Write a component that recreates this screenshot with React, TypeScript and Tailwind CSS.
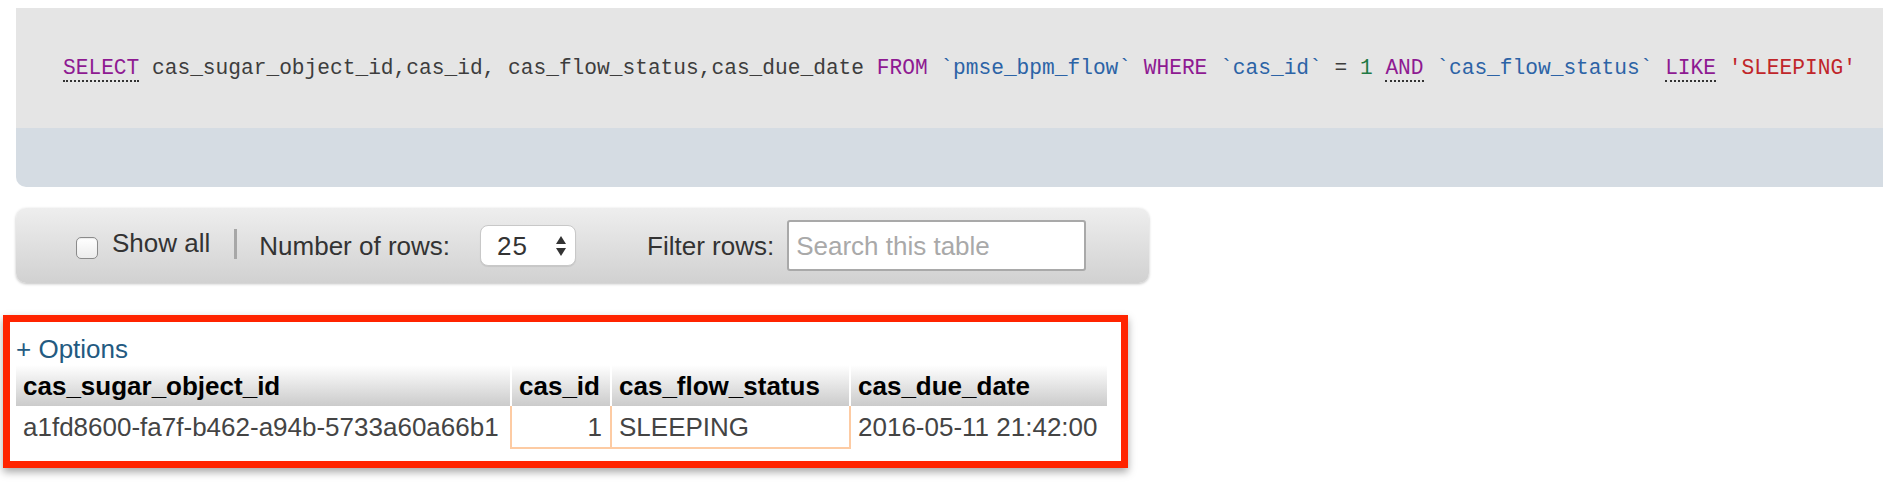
import React from 'react'

const sans = { fontFamily: '"Liberation Sans", Arial, Helvetica, sans-serif' }

function Kw({ children, dotted }: { children: React.ReactNode; dotted?: boolean }) {
  return (
    <span className={dotted ? 'text-[#8e1a92] border-b-[2px] border-dotted border-[#333]' : 'text-[#8e1a92]'}>{children}</span>
  )
}

function Ident({ children }: { children: React.ReactNode }) {
  return <span className="text-[#2c63a6]">{children}</span>
}

function SqlBox() {
  return (
    <div className="ml-[16px] mt-[8px] w-[1867px] overflow-hidden rounded-bl-[10px]">
      <div className="flex h-[120px] items-center bg-[#e5e5e5] pl-[47px]">
        <code className="whitespace-pre font-['Liberation_Mono','Courier_New',monospace] text-[21.2px] leading-[26px] text-[#3d3d3d]">
          <Kw dotted>SELECT</Kw> cas_sugar_object_id,cas_id, cas_flow_status,cas_due_date <Kw>FROM</Kw>{' '}
          <Ident>`pmse_bpm_flow`</Ident> <Kw>WHERE</Kw> <Ident>`cas_id`</Ident> = <span className="text-[#1f7a45]">1</span>{' '}
          <Kw dotted>AND</Kw> <Ident>`cas_flow_status`</Ident> <Kw dotted>LIKE</Kw>{' '}
          <span className="text-[#c0262a]">'SLEEPING'</span>
        </code>
      </div>
      <div className="h-[59px] bg-[#d5dce3]" />
    </div>
  )
}

function UpDown() {
  return (
    <svg width="12" height="22" viewBox="0 0 12 22" className="block">
      <path d="M6 1 L11 9 L1 9 Z" fill="#333" />
      <path d="M6 21 L11 13 L1 13 Z" fill="#333" />
    </svg>
  )
}

function Toolbar() {
  return (
    <div
      className="ml-[16px] mt-[21px] flex h-[75px] w-[1133px] items-center rounded-[10px] bg-gradient-to-b from-[#eeeeee] to-[#d1d1d1] text-[26px] text-[#333] shadow-[0_1px_3px_rgba(0,0,0,0.25)]"
      style={sans}
    >
      <div className="ml-[60px] mt-[4px] h-[22px] w-[22px] rounded-[5px] border border-[#8b8b8b] bg-gradient-to-b from-white to-[#ececec] shadow-[inset_0_1px_1px_rgba(0,0,0,0.08)]" />
      <span className="ml-[14px] -mt-[6px] leading-[30px]">Show all</span>
      <div className="ml-[24px] -mt-[4px] h-[30px] w-[3px] bg-[#a7a7a7]" />
      <span className="ml-[22px] leading-[30px]">Number of rows:</span>
      <div className="ml-[30px] flex h-[41px] w-[96px] items-center justify-between rounded-[8px] border border-[#c8c8c8] bg-white pl-[16px] pr-[8px] shadow-[0_1px_1px_rgba(0,0,0,0.08)]">
        <span className="leading-[30px] tracking-[1px]">25</span>
        <UpDown />
      </div>
      <span className="ml-[71px] leading-[30px]">Filter rows:</span>
      <div className="ml-[13px] flex h-[51px] w-[299px] items-center rounded-[3px] border-[2px] border-[#a9a9a9] bg-white pl-[7px]">
        <span className="leading-[30px] text-[#a9a9a9]">Search this table</span>
      </div>
    </div>
  )
}

function ResultTable() {
  const th = 'h-[41px] p-0 pl-[7px] text-left align-middle font-bold text-black bg-gradient-to-b from-white to-[#cbcbcb]'
  return (
    <div
      className="ml-[3px] mt-[32px] h-[153px] w-[1125px] border-[7px] border-[#ff2400] pl-[6px] pt-[11px] shadow-[0_4px_8px_rgba(0,0,0,0.35)]"
      style={sans}
    >
      <div className="text-[26px] leading-[32px] text-[#235a81]">+ Options</div>
      <table className="border-collapse text-[26px] leading-[30px]">
        <thead>
          <tr>
            <th className={`${th} w-[495px]`}>cas_sugar_object_id</th>
            <th className={`${th} w-[100px] border-l-[2px] border-white`}>cas_id</th>
            <th className={`${th} w-[239px] border-l-[2px] border-white`}>cas_flow_status</th>
            <th className={`${th} w-[257px] border-l-[2px] border-white`}>cas_due_date</th>
          </tr>
        </thead>
        <tbody className="text-[#444]">
          <tr>
            <td className="h-[42px] p-0 pl-[7px] align-middle">a1fd8600-fa7f-b462-a94b-5733a60a66b1</td>
            <td className="h-[42px] border-[2px] border-t-0 border-[#fdcba3] p-0 pr-[8px] text-right align-middle">1</td>
            <td className="h-[42px] border-[2px] border-t-0 border-[#fdcba3] p-0 pl-[7px] align-middle">SLEEPING</td>
            <td className="h-[42px] p-0 pl-[7px] align-middle">2016-05-11 21:42:00</td>
          </tr>
        </tbody>
      </table>
    </div>
  )
}

export default function App() {
  return (
    <div className="h-[492px] w-[1896px] overflow-hidden bg-white">
      <div className="pt-0">
        <SqlBox />
        <Toolbar />
        <ResultTable />
      </div>
    </div>
  )
}
